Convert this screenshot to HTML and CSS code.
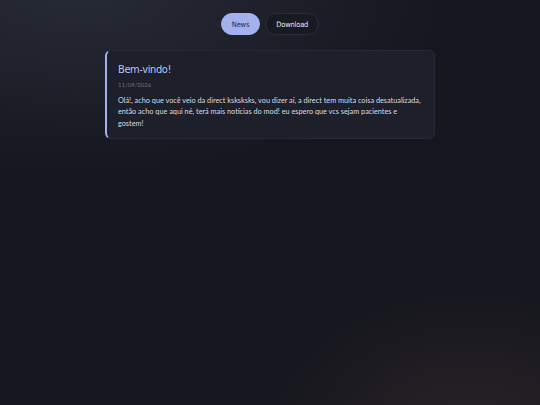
FILE: index.html
```html
<!DOCTYPE html>
<html lang="pt-BR">
<head>
  <meta charset="UTF-8">
  <title>News</title>
  <link rel="stylesheet" href="styles.css">
</head>
<body>
  <div class="page">
    <!-- Abas -->
    <nav class="tabs">
      <button class="tab active">News</button>
      <button class="tab">Download</button>
    </nav>

    <!-- Noticias -->
    <div class="news">
      <div class="post">
        <h2 class="post-title">Bem-vindo!</h2>
        <div class="post-date">11/09/2026</div>
        <p class="post-text">Olá!, acho que você veio da direct ksksksks, vou dizer aí, a direct tem muita coisa desatualizada, então acho que aqui né, terá mais notícias do mod! eu espero que vcs sejam pacientes e gostem!</p>
      </div>
    </div>
  </div>
</body>
</html>
```

FILE: styles.css
```css
html, body {
  margin: 0;
  height: 100%;
}
body {
  font-family: Lato, "Noto Sans", sans-serif;
  color: #d7d9e0;
  background:
    radial-gradient(ellipse 220px 160px at 470px 440px, rgba(56, 44, 46, 0.6), transparent 100%),
    radial-gradient(ellipse 380px 190px at 80px -10px, rgba(40, 44, 56, 0.95), transparent 100%),
    #15161e;
  overflow: hidden;
}
.page {
  padding-top: 13px;
}
.tabs {
  display: flex;
  justify-content: center;
  gap: 5px;
}
.tab {
  height: 22px;
  padding: 0 10px;
  border-radius: 11px;
  border: 1px solid #2a2d3a;
  background: #181a23;
  color: #e4e6ee;
  font-family: "DejaVu Sans Condensed", "DejaVu Sans", sans-serif;
  font-size: 7.5px;
  letter-spacing: -0.2px;
  cursor: pointer;
}
.tab.active {
  background: #a3b1ee;
  border-color: #a3b1ee;
  color: #2a2f45;
}
.news {
  width: 330px;
  margin: 15px auto 0;
}
.post {
  background: #1d1f2a;
  border: 1px solid #252836;
  border-left: 2px solid #a3b1ee;
  border-radius: 6px;
  padding: 12px 12px 9px 11px;
}
.post-title {
  margin: 0;
  font-family: "DejaVu Sans Condensed", "DejaVu Sans", sans-serif;
  font-weight: normal;
  font-size: 11px;
  letter-spacing: -0.4px;
  color: #b9c3f2;
}
.post-date {
  margin-top: 5px;
  font-size: 6px;
  color: #6e7282;
}
.post-text {
  margin: 7px 0 0;
  font-size: 7.3px;
  line-height: 11.4px;
  color: #d9dbe2;
}
```
